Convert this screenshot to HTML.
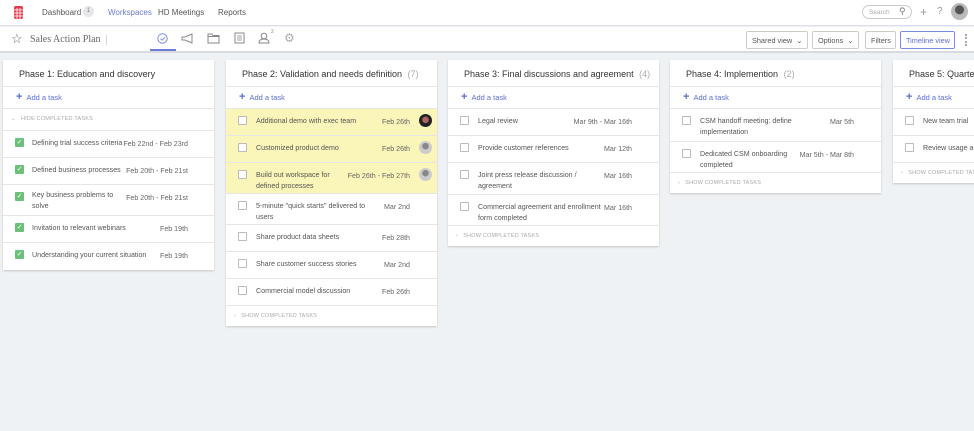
<!DOCTYPE html>
<html><head><meta charset="utf-8"><style>
*{box-sizing:border-box;margin:0;padding:0}
body{width:974px;height:431px;overflow:hidden;background:#eff2f4;font-family:"Liberation Sans",sans-serif;color:#444;position:relative}
.top{position:absolute;left:0;top:0;width:974px;height:26px;background:#fff;border-bottom:1px solid #dcdcf2}
.top span{position:absolute;top:8px;font-size:8px;color:#555}
.bar{position:absolute;left:0;top:27px;width:974px;height:26px;background:#fff;border-bottom:2px solid #d8dadd}
.col{position:absolute;top:60px;width:211px;background:#fff;box-shadow:0 1px 2px rgba(0,0,0,.18)}
.hd{height:27px;border-bottom:1px solid #e6e6e6;font-size:9px;color:#333;padding:9px 0 0 16px;white-space:nowrap}
.hd i{font-style:normal;color:#aaa;margin-left:3px}
.add{height:22px;border-bottom:1px solid #e6e6e6;font-size:7.5px;color:#5a6ed8;padding:6px 0 0 13px}
.add b{font-size:11px;margin-right:4px;line-height:7px}
.row{position:relative;border-bottom:1px solid #e6e6e6;font-size:7.1px;color:#555}
.row .t{position:absolute;left:30px;top:7px;line-height:10.5px;width:115px}
.row .d{position:absolute;right:27px;top:9px;color:#666;white-space:nowrap}
.row .cb{position:absolute;left:12px;top:7px;width:9px;height:9px;border:1px solid #bbb;border-radius:1px;background:#fff}
.row .ck{position:absolute;left:12px;top:7px;width:9px;height:9px;background:#6cc07a;border-radius:1px;color:#fff;font-size:7px;line-height:9px;text-align:center}
.y{background:#faf5b8}
.sh{height:20px;font-size:5.5px;color:#aaa;padding:7px 0 0 8px;letter-spacing:.2px}
.av{position:absolute;right:5px;top:5px;width:13px;height:13px;border-radius:50%;background:radial-gradient(circle at 50% 40%,#888 0 3px,#ccc 3.5px)}
.btn{position:absolute;top:4px;height:18px;border:1px solid #ccc;border-radius:2px;font-size:7.3px;color:#555;padding:4px 5px 0;white-space:nowrap}
</style></head><body>
<div class="top">
 <svg style="position:absolute;left:14px;top:6px" width="9" height="13" viewBox="0 0 9 13"><rect x="0" y="0" width="9" height="13" rx="2" fill="#e53a4a"/><g stroke="#fff" stroke-width=".8"><line x1="0" y1="4" x2="9" y2="4"/><line x1="0" y1="7" x2="9" y2="7"/><line x1="0" y1="10" x2="9" y2="10"/><line x1="3" y1="2" x2="3" y2="13"/><line x1="6" y1="2" x2="6" y2="13"/></g></svg>
 <span style="left:42px">Dashboard</span>
 <span style="left:83px;top:6px;width:11px;height:11px;border-radius:50%;background:#e6e6ea;font-size:6px;text-align:center;line-height:11px;color:#888">1</span>
 <span style="left:108px;color:#6b7bd8">Workspaces</span>
 <span style="left:158px">HD Meetings</span>
 <span style="left:218px">Reports</span>
 <span style="left:862px;top:5px;width:50px;height:14px;border:1px solid #ccc;border-radius:8px;font-size:6.5px;color:#aaa;padding:3px 0 0 6px">Search</span>
 <span style="left:899px;top:6px;font-size:9px;color:#777">&#9906;</span>
 <span style="left:920px;top:5px;font-size:12px;color:#999">+</span>
 <span style="left:937px;top:6px;font-size:10px;color:#999">?</span>
 <span style="left:951px;top:3px;width:17px;height:17px;border-radius:50%;background:radial-gradient(circle at 50% 40%,#555 0 4px,#bbb 5px)"></span>
</div>
<div class="bar">
 <span style="position:absolute;left:11px;top:4px;font-size:13px;color:#666">☆</span>
 <span style="position:absolute;left:30px;top:7px;font-family:'Liberation Serif',serif;font-size:10px;color:#666">Sales Action Plan</span>
 <span style="position:absolute;left:106px;top:8px;width:1px;height:10px;background:#ddd"></span>
 <svg style="position:absolute;left:157px;top:6px" width="11" height="11"><circle cx="5.5" cy="5.5" r="4.7" fill="none" stroke="#7a8be0"/><path d="M3.5 5.7l1.5 1.5 3-3" fill="none" stroke="#7a8be0"/></svg>
 <span style="position:absolute;left:150px;top:22px;width:26px;height:2px;background:#6b7bd8"></span>
 <svg style="position:absolute;left:181px;top:6px" width="13" height="11"><path d="M1 4h3l7-3v9l-7-3H1z" fill="none" stroke="#888"/></svg>
 <svg style="position:absolute;left:207px;top:6px" width="13" height="11"><path d="M1 1h4l1 1.5h6V10H1z" fill="none" stroke="#888"/><line x1="1" y1="3.5" x2="12" y2="3.5" stroke="#888"/></svg>
 <svg style="position:absolute;left:234px;top:5px" width="11" height="12"><rect x="1" y="1" width="9" height="10" fill="none" stroke="#888"/><path d="M3 4h5M3 6h5M3 8h5" stroke="#888" stroke-width=".7"/></svg>
 <svg style="position:absolute;left:258px;top:5px" width="14" height="12"><circle cx="6" cy="4" r="2.8" fill="none" stroke="#888"/><path d="M1 11c0-3 2-4 5-4s5 1 5 4z" fill="none" stroke="#888"/></svg>
 <span style="position:absolute;left:271px;top:2px;font-size:5px;color:#888">2</span>
 <span style="position:absolute;left:284px;top:4px;font-size:12px;color:#aaa">⚙</span>
 <span class="btn" style="left:746px;width:62px">Shared view &nbsp;⌄</span>
 <span class="btn" style="left:812px;width:47px">Options &nbsp;⌄</span>
 <span class="btn" style="left:865px;width:31px">Filters</span>
 <span class="btn" style="left:900px;width:55px;border-color:#7a8be0;color:#5a6ed8">Timeline view</span>
 <span style="position:absolute;left:965px;top:7px;width:2px;height:12px;border-left:2px dotted #aaa"></span>
</div>

<div class="col" style="left:3px">
 <div class="hd">Phase 1: Education and discovery</div>
 <div class="add"><b>+</b>Add a task</div>
 <div class="sh" style="border-bottom:1px solid #e6e6e6;height:22px">⌄ &nbsp; HIDE COMPLETED TASKS</div>
 <div class="row" style="height:27px"><span class="ck">✓</span><span class="t" style="left:29px;top:7px;width:95px">Defining trial success criteria</span><span class="d" style="right:26px">Feb 22nd - Feb 23rd</span></div>
 <div class="row" style="height:27px"><span class="ck">✓</span><span class="t" style="left:29px;top:7px">Defined business processes</span><span class="d" style="right:26px">Feb 20th - Feb 21st</span></div>
 <div class="row" style="height:31px"><span class="ck">✓</span><span class="t" style="left:29px;top:5px;width:85px">Key business problems to solve</span><span class="d" style="right:26px">Feb 20th - Feb 21st</span></div>
 <div class="row" style="height:27px"><span class="ck">✓</span><span class="t" style="left:29px;top:7px;width:105px">Invitation to relevant webinars</span><span class="d" style="right:26px">Feb 19th</span></div>
 <div class="row" style="height:27px;border:0"><span class="ck">✓</span><span class="t" style="left:29px;top:7px;width:125px">Understanding your current situation</span><span class="d" style="right:26px">Feb 19th</span></div>
</div>

<div class="col" style="left:226px">
 <div class="hd">Phase 2: Validation and needs definition <i>(7)</i></div>
 <div class="add"><b>+</b>Add a task</div>
 <div class="row y" style="height:27px"><span class="cb"></span><span class="t" style="width:125px">Additional demo with exec team</span><span class="d">Feb 26th</span><span class="av" style="background:radial-gradient(circle at 50% 45%,#a66 0 3px,#222 3.5px)"></span></div>
 <div class="row y" style="height:27px"><span class="cb"></span><span class="t">Customized product demo</span><span class="d">Feb 26th</span><span class="av"></span></div>
 <div class="row y" style="height:31px"><span class="cb"></span><span class="t" style="width:82px">Build out workspace for defined processes</span><span class="d">Feb 26th - Feb 27th</span><span class="av"></span></div>
 <div class="row" style="height:31px"><span class="cb"></span><span class="t" style="width:118px">5-minute "quick starts" delivered to users</span><span class="d">Mar 2nd</span></div>
 <div class="row" style="height:27px"><span class="cb"></span><span class="t">Share product data sheets</span><span class="d">Feb 28th</span></div>
 <div class="row" style="height:27px"><span class="cb"></span><span class="t" style="width:125px">Share customer success stories</span><span class="d">Mar 2nd</span></div>
 <div class="row" style="height:27px"><span class="cb"></span><span class="t" style="width:125px">Commercial model discussion</span><span class="d">Feb 26th</span></div>
 <div class="sh">› &nbsp; SHOW COMPLETED TASKS</div>
</div>

<div class="col" style="left:448px">
 <div class="hd">Phase 3: Final discussions and agreement <i>(4)</i></div>
 <div class="add"><b>+</b>Add a task</div>
 <div class="row" style="height:27px"><span class="cb"></span><span class="t">Legal review</span><span class="d">Mar 9th - Mar 16th</span></div>
 <div class="row" style="height:27px"><span class="cb"></span><span class="t" style="width:125px">Provide customer references</span><span class="d">Mar 12th</span></div>
 <div class="row" style="height:32px"><span class="cb"></span><span class="t" style="width:105px">Joint press release discussion / agreement</span><span class="d">Mar 16th</span></div>
 <div class="row" style="height:31px"><span class="cb"></span><span class="t" style="width:125px">Commercial agreement and enrollment form completed</span><span class="d">Mar 16th</span></div>
 <div class="sh">› &nbsp; SHOW COMPLETED TASKS</div>
</div>

<div class="col" style="left:670px">
 <div class="hd">Phase 4: Implemention <i>(2)</i></div>
 <div class="add"><b>+</b>Add a task</div>
 <div class="row" style="height:33px"><span class="cb"></span><span class="t" style="width:100px">CSM handoff meeting: define implementation</span><span class="d">Mar 5th</span></div>
 <div class="row" style="height:31px"><span class="cb"></span><span class="t" style="width:92px">Dedicated CSM onboarding completed</span><span class="d">Mar 5th - Mar 8th</span></div>
 <div class="sh">› &nbsp; SHOW COMPLETED TASKS</div>
</div>

<div class="col" style="left:893px">
 <div class="hd">Phase 5: Quarterly review</div>
 <div class="add"><b>+</b>Add a task</div>
 <div class="row" style="height:27px"><span class="cb"></span><span class="t">New team trial</span></div>
 <div class="row" style="height:27px"><span class="cb"></span><span class="t" style="width:150px">Review usage and adoption</span></div>
 <div class="sh">› &nbsp; SHOW COMPLETED TASKS</div>
</div>
</body></html>
